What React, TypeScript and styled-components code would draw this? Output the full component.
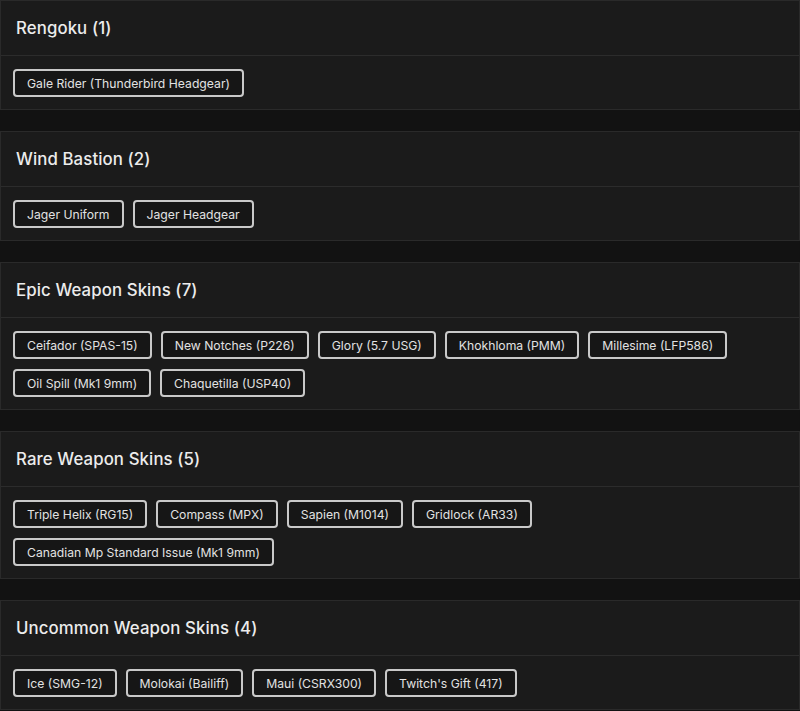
import React from 'react'
import styled, { createGlobalStyle } from 'styled-components'

const GlobalStyle = createGlobalStyle`
    html, body {
        margin: 0;
        padding: 0;
        background: #121212;
    }
    body {
        font-family: Inter, "Noto Sans", sans-serif;
        color: #e6e6e6;
    }
`

const Page = styled.div`
    display: flex;
    flex-direction: column;
    gap: 21px;
`

const Card = styled.section`
    background: #1b1b1b;
    border: 1px solid #2a2a2a;
`

const CardHeader = styled.div`
    height: 54px;
    display: flex;
    align-items: center;
    padding: 0 15px;
    border-bottom: 1px solid #2c2c2c;
`

const Title = styled.h2`
    margin: 0;
    font-size: 16.8px;
    font-weight: 500;
    color: #ececec;
    letter-spacing: 0.1px;
`

const ChipList = styled.div`
    display: flex;
    flex-wrap: wrap;
    gap: 10px 9px;
    padding: 13px 12px 12px;
`

const Chip = styled.span`
    display: inline-flex;
    align-items: center;
    height: 24px;
    padding: 0 12px;
    border: 2px solid #c9c9c9;
    border-radius: 4px;
    background: #161616;
    font-size: 12.2px;
    color: #e2e2e2;
    white-space: nowrap;
`

type Group = { name: string; items: string[] }

const groups: Group[] = [
    { name: 'Rengoku', items: ['Gale Rider (Thunderbird Headgear)'] },
    { name: 'Wind Bastion', items: ['Jager Uniform', 'Jager Headgear'] },
    {
        name: 'Epic Weapon Skins',
        items: [
            'Ceifador (SPAS-15)',
            'New Notches (P226)',
            'Glory (5.7 USG)',
            'Khokhloma (PMM)',
            'Millesime (LFP586)',
            'Oil Spill (Mk1 9mm)',
            'Chaquetilla (USP40)',
        ],
    },
    {
        name: 'Rare Weapon Skins',
        items: [
            'Triple Helix (RG15)',
            'Compass (MPX)',
            'Sapien (M1014)',
            'Gridlock (AR33)',
            'Canadian Mp Standard Issue (Mk1 9mm)',
        ],
    },
    {
        name: 'Uncommon Weapon Skins',
        items: ['Ice (SMG-12)', 'Molokai (Bailiff)', 'Maui (CSRX300)', "Twitch's Gift (417)"],
    },
]

const App = () => {
    return (
        <>
            <GlobalStyle />
            <Page>
                {groups.map(group => (
                    <Card key={group.name}>
                        <CardHeader>
                            <Title>{group.name} ({group.items.length})</Title>
                        </CardHeader>
                        <ChipList>
                            {group.items.map(item => <Chip key={item}>{item}</Chip>)}
                        </ChipList>
                    </Card>
                ))}
            </Page>
        </>
    )
}

export default App
